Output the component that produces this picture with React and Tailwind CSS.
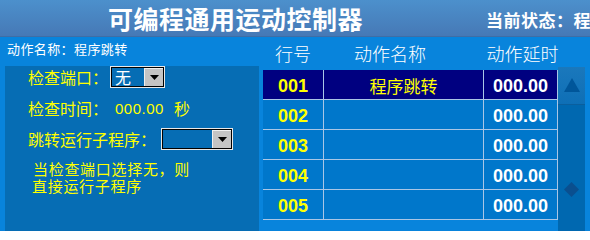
import React from 'react';

const rows = [
  { no: '001', name: '程序跳转', delay: '000.00', active: true },
  { no: '002', name: '', delay: '000.00' },
  { no: '003', name: '', delay: '000.00' },
  { no: '004', name: '', delay: '000.00' },
  { no: '005', name: '', delay: '000.00' },
];

function Select({ value, width }) {
  return (
    <div className={`${width} h-[22px] border border-[#e8e8e8] flex`}>
      <div className="flex-1 border border-black flex items-center">
        <span className="flex-1 pl-[3px] text-white text-[16px] leading-none">{value}</span>
        <div className="w-[19px] h-full bg-[#c4c4c4] border-t border-l border-[#f0f0f0] flex items-center justify-center">
          <svg width="9" height="5" viewBox="0 0 9 5">
            <path d="M0 0 H9 L4.5 5 Z" fill="#000" />
          </svg>
        </div>
      </div>
    </div>
  );
}

export default function App() {
  return (
    <div className="w-[590px] h-[231px] overflow-hidden bg-[#0884dc] font-['Noto_Sans_CJK_SC',sans-serif]">
      {/* Title bar */}
      <header className="h-[37px] flex items-center pl-[108px] bg-gradient-to-b from-[#4c90cc] to-[#4679b6] border-b border-[#3f6ea6] whitespace-nowrap overflow-hidden">
        <h1 className="w-[378px] shrink-0 text-white text-[25px] font-bold tracking-[0.5px] leading-none">可编程通用运动控制器</h1>
        <span className="text-white text-[17px] font-bold tracking-[0.5px] leading-none pt-[2px]">当前状态：程序</span>
      </header>

      <div className="flex">
        {/* Left - action settings */}
        <div className="w-[263px]">
          <div className="h-[23px] flex items-center pl-[7px] text-white text-[13px] tracking-[0.4px]">
            动作名称：程序跳转
          </div>
          <div className="ml-[5px] w-[254px] h-[167px] bg-[#066db4] text-[#ffff00] text-[16px]">
            <div className="flex items-center h-[22px] mt-[6px] pl-[23px]">
              <span className="w-[82px] leading-none">检查端口：</span>
              <Select value="无" width="w-[55px]" />
            </div>
            <div className="flex items-center h-[22px] mt-[9px] pl-[23px]">
              <span className="w-[87px] leading-none">检查时间：</span>
              <span className="w-[59px] text-[15px] font-['Liberation_Sans',sans-serif] tracking-[0.5px] leading-none">000.00</span>
              <span className="leading-none">秒</span>
            </div>
            <div className="flex items-center h-[22px] mt-[9px] pl-[23px]">
              <span className="w-[133px] leading-none whitespace-nowrap">跳转运行子程序：</span>
              <Select value="" width="w-[72px]" />
            </div>
            <div className="mt-[10px] pl-[27px] text-[15px] tracking-[0.7px]">
              <p className="leading-[17px] pl-[1px]">当检查端口选择无，则</p>
              <p className="leading-[17px]">直接运行子程序</p>
            </div>
          </div>
        </div>

        {/* Right - action table */}
        <div className="w-[295px]">
          <div className="h-[33px] flex items-center text-white text-[18px] font-light whitespace-nowrap">
            <span className="w-[60px] text-center">行号</span>
            <span className="w-[160px] text-center pr-[26px]">动作名称</span>
            <span className="w-[75px] flex justify-center pl-[4px]">动作延时</span>
          </div>
          {rows.map((r) => (
            <div
              key={r.no}
              className={`h-[30px] flex border-b border-[#a9c6e6] ${r.active ? 'bg-[#000080]' : 'bg-[#0077cb]'}`}
            >
              <div className="w-[60px] flex items-center justify-center pt-[3px] text-[#ffff00] text-[18px] font-bold font-['Liberation_Sans',sans-serif]">
                {r.no}
              </div>
              <div className="w-[160px] border-l border-[#a9c6e6] flex items-center justify-center pt-[2px] text-[#ffff00] text-[17px]">
                {r.name}
              </div>
              <div className="w-[75px] border-l border-r border-[#a9c6e6] flex items-center justify-center pt-[3px] text-white text-[18px] font-bold font-['Liberation_Sans',sans-serif]">
                {r.delay}
              </div>
            </div>
          ))}
        </div>

        {/* Scrollbar */}
        <div className="w-[27px] mt-[30px] h-[164px] bg-[#0068b0]">
          <div className="h-[38px] bg-gradient-to-b from-[#1a78bc] to-[#0e6fb6] border-b border-[#0a5f9e] flex items-start justify-center pt-[11px]">
            <svg width="16" height="14" viewBox="0 0 16 14">
              <path d="M8 0 L16 14 H0 Z" fill="#00569a" />
            </svg>
          </div>
          <div className="flex justify-center pt-[77px]">
            <svg width="15" height="15" viewBox="0 0 15 15">
              <path d="M7.5 0 L15 7.5 L7.5 15 L0 7.5 Z" fill="#0a4f8f" />
            </svg>
          </div>
        </div>
      </div>
    </div>
  );
}
